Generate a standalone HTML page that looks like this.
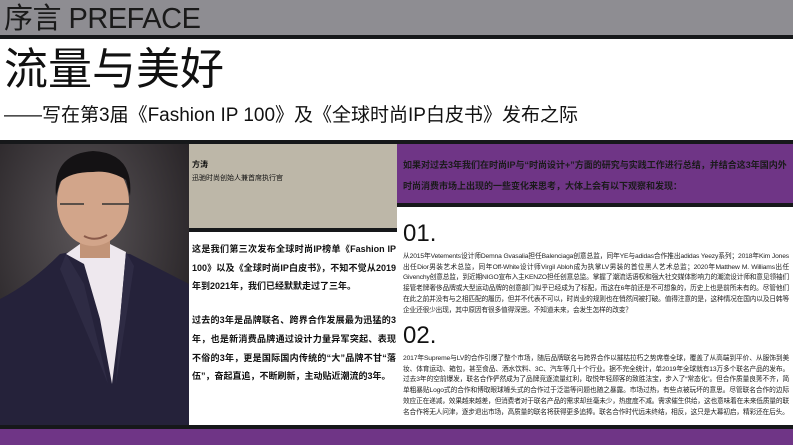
<!DOCTYPE html>
<html><head><meta charset="utf-8"><style>
*{margin:0;padding:0;box-sizing:border-box}
body{width:793px;height:445px;overflow:hidden;background:#fff;font-family:"Liberation Sans","Noto Sans CJK SC",sans-serif;position:relative;color:#111}
.abs{position:absolute}
.b{font-weight:bold}
.p{font-size:6.7px;line-height:10.7px;color:#222;text-align:justify;letter-spacing:-0.15px}
</style></head><body>
<div class="abs" style="left:0;top:0;width:793px;height:35px;background:#8e8d92"></div>
<div class="abs" style="left:4px;top:3px;font-size:29px;line-height:32px;color:#1a1a1a;letter-spacing:-0.5px">序言 PREFACE</div>
<div class="abs" style="left:0;top:35px;width:793px;height:4px;background:#16181a"></div>
<div class="abs" style="left:4px;top:44px;font-size:44px;line-height:52px;color:#111">流量与美好</div>
<div class="abs" style="left:4px;top:104px;font-size:19px;line-height:24px;color:#111">——写在第3届《Fashion IP 100》及《全球时尚IP白皮书》发布之际</div>
<div class="abs" style="left:0;top:140px;width:793px;height:4px;background:#16181a"></div>

<svg class="abs" style="left:0;top:144px" width="189" height="281" viewBox="0 0 189 281">
<defs><radialGradient id="bg" cx="0.45" cy="0.3" r="0.7"><stop offset="0" stop-color="#5a5558"/><stop offset="1" stop-color="#231f22"/></radialGradient></defs>
<rect width="189" height="281" fill="url(#bg)"/>
<path d="M0 155 Q30 140 60 110 L70 108 L130 110 Q160 125 189 140 L189 281 L0 281Z" fill="#25223a"/>
<path d="M66 110 L84 120 L100 175 L112 240 L120 175 L126 108 L110 100 L80 100Z" fill="#eee8ee"/>
<path d="M66 110 L60 125 L100 220 L108 240 L84 140Z" fill="#2e2b44"/>
<path d="M126 108 L134 122 L116 240 L120 175Z" fill="#2e2b44"/>
<rect x="80" y="88" width="30" height="26" fill="#c29478"/>
<ellipse cx="93" cy="58" rx="36" ry="44" fill="#d2a58a"/>
<path d="M56 52 Q52 10 93 7 Q134 9 130 52 L126 36 Q110 26 93 28 Q70 28 60 38Z" fill="#141214"/>
<path d="M60 60 h24 M102 60 h27" stroke="#333" stroke-width="1.5"/>
<path d="M84 92 Q95 98 107 91" stroke="#8a5a4a" stroke-width="2" fill="none"/>
</svg>

<div class="abs" style="left:189px;top:144px;width:208px;height:84px;background:#bdb7a8"></div>
<div class="abs b" style="left:192px;top:160px;font-size:8px;line-height:10px">方涛</div>
<div class="abs" style="left:192px;top:174px;font-size:7px;line-height:9px">迅驰时尚创始人兼首席执行官</div>
<div class="abs" style="left:189px;top:228px;width:208px;height:4px;background:#16181a"></div>
<div class="abs b" style="left:192px;top:240px;width:204px;font-size:9px;line-height:18.7px;text-align:justify">
<p>这是我们第三次发布全球时尚IP榜单《Fashion IP 100》以及《全球时尚IP白皮书》，不知不觉从2019年到2021年，我们已经默默走过了三年。</p>
<p style="margin-top:15px">过去的3年是品牌联名、跨界合作发展最为迅猛的3年，也是新消费品牌通过设计力量异军突起、表现不俗的3年，更是国际国内传统的“大”品牌不甘“落伍”，奋起直追，不断刷新，主动贴近潮流的3年。</p></div>

<div class="abs" style="left:397px;top:144px;width:396px;height:59px;background:#6f3586"></div>
<div class="abs b" style="left:403px;top:155px;width:385px;font-size:9px;line-height:21px;color:#1a1a1a">如果对过去3年我们在时尚IP与“时尚设计+”方面的研究与实践工作进行总结，并结合这3年国内外时尚消费市场上出现的一些变化来思考，大体上会有以下观察和发现：</div>
<div class="abs" style="left:397px;top:203px;width:396px;height:4px;background:#16181a"></div>

<div class="abs" style="left:403px;top:220px;font-size:24px;line-height:28px">01.</div>
<div class="abs p" style="left:403px;top:252px;width:386px">从2015年Vetements设计师Demna Gvasalia担任Balenciaga创意总监，同年YE与adidas合作推出adidas Yeezy系列；2018年Kim Jones出任Dior男装艺术总监，同年Off-White设计师Virgil Abloh成为执掌LV男装的首位黑人艺术总监；2020年Matthew M. Williams出任Givenchy创意总监，到近期NIGO宣布入主KENZO担任创意总监。掌握了潮流话语权和强大社交媒体影响力的潮流设计师和意见领袖们接管老牌奢侈品牌或大型运动品牌的创意部门似乎已经成为了标配，而这在6年前还是不可想象的，历史上也是前所未有的。尽管他们在此之前并没有与之相匹配的履历，但并不代表不可以，时尚业的规则也在悄然间被打破。值得注意的是，这种情况在国内以及日韩等企业还很少出现，其中原因有很多值得深思。不知道未来，会发生怎样的改变？</div>

<div class="abs" style="left:403px;top:322px;font-size:24px;line-height:28px">02.</div>
<div class="abs p" style="left:403px;top:354px;width:386px">2017年Supreme与LV的合作引爆了整个市场，随后品牌联名与跨界合作以摧枯拉朽之势席卷全球，覆盖了从高端到平价、从服饰到美妆、体育运动、箱包，甚至食品、酒水饮料、3C、汽车等几十个行业。据不完全统计，单2019年全球就有13万多个联名产品的发布。过去3年的空前爆发，联名合作俨然成为了品牌竞逐流量红利，取悦年轻顾客的致胜法宝，步入了“常态化”。但合作质量良莠不齐，简单粗暴贴Logo式的合作和博取眼球噱头式的合作过于泛滥等问题也随之暴露。市场过热，有些点被玩坏的意思。尽管联名合作的边际效应正在递减，效果越来越差，但消费者对于联名产品的需求却丝毫未少，热度度不减。需求催生供给，这也意味着在未来低质量的联名合作将无人问津，逐步退出市场，高质量的联名将获得更多追捧。联名合作时代远未终结，相反，这只是大幕初启，精彩还在后头。</div>

<div class="abs" style="left:0;top:425px;width:793px;height:4px;background:#16181a"></div>
<div class="abs" style="left:0;top:429px;width:793px;height:16px;background:#6f3586"></div>
</body></html>
